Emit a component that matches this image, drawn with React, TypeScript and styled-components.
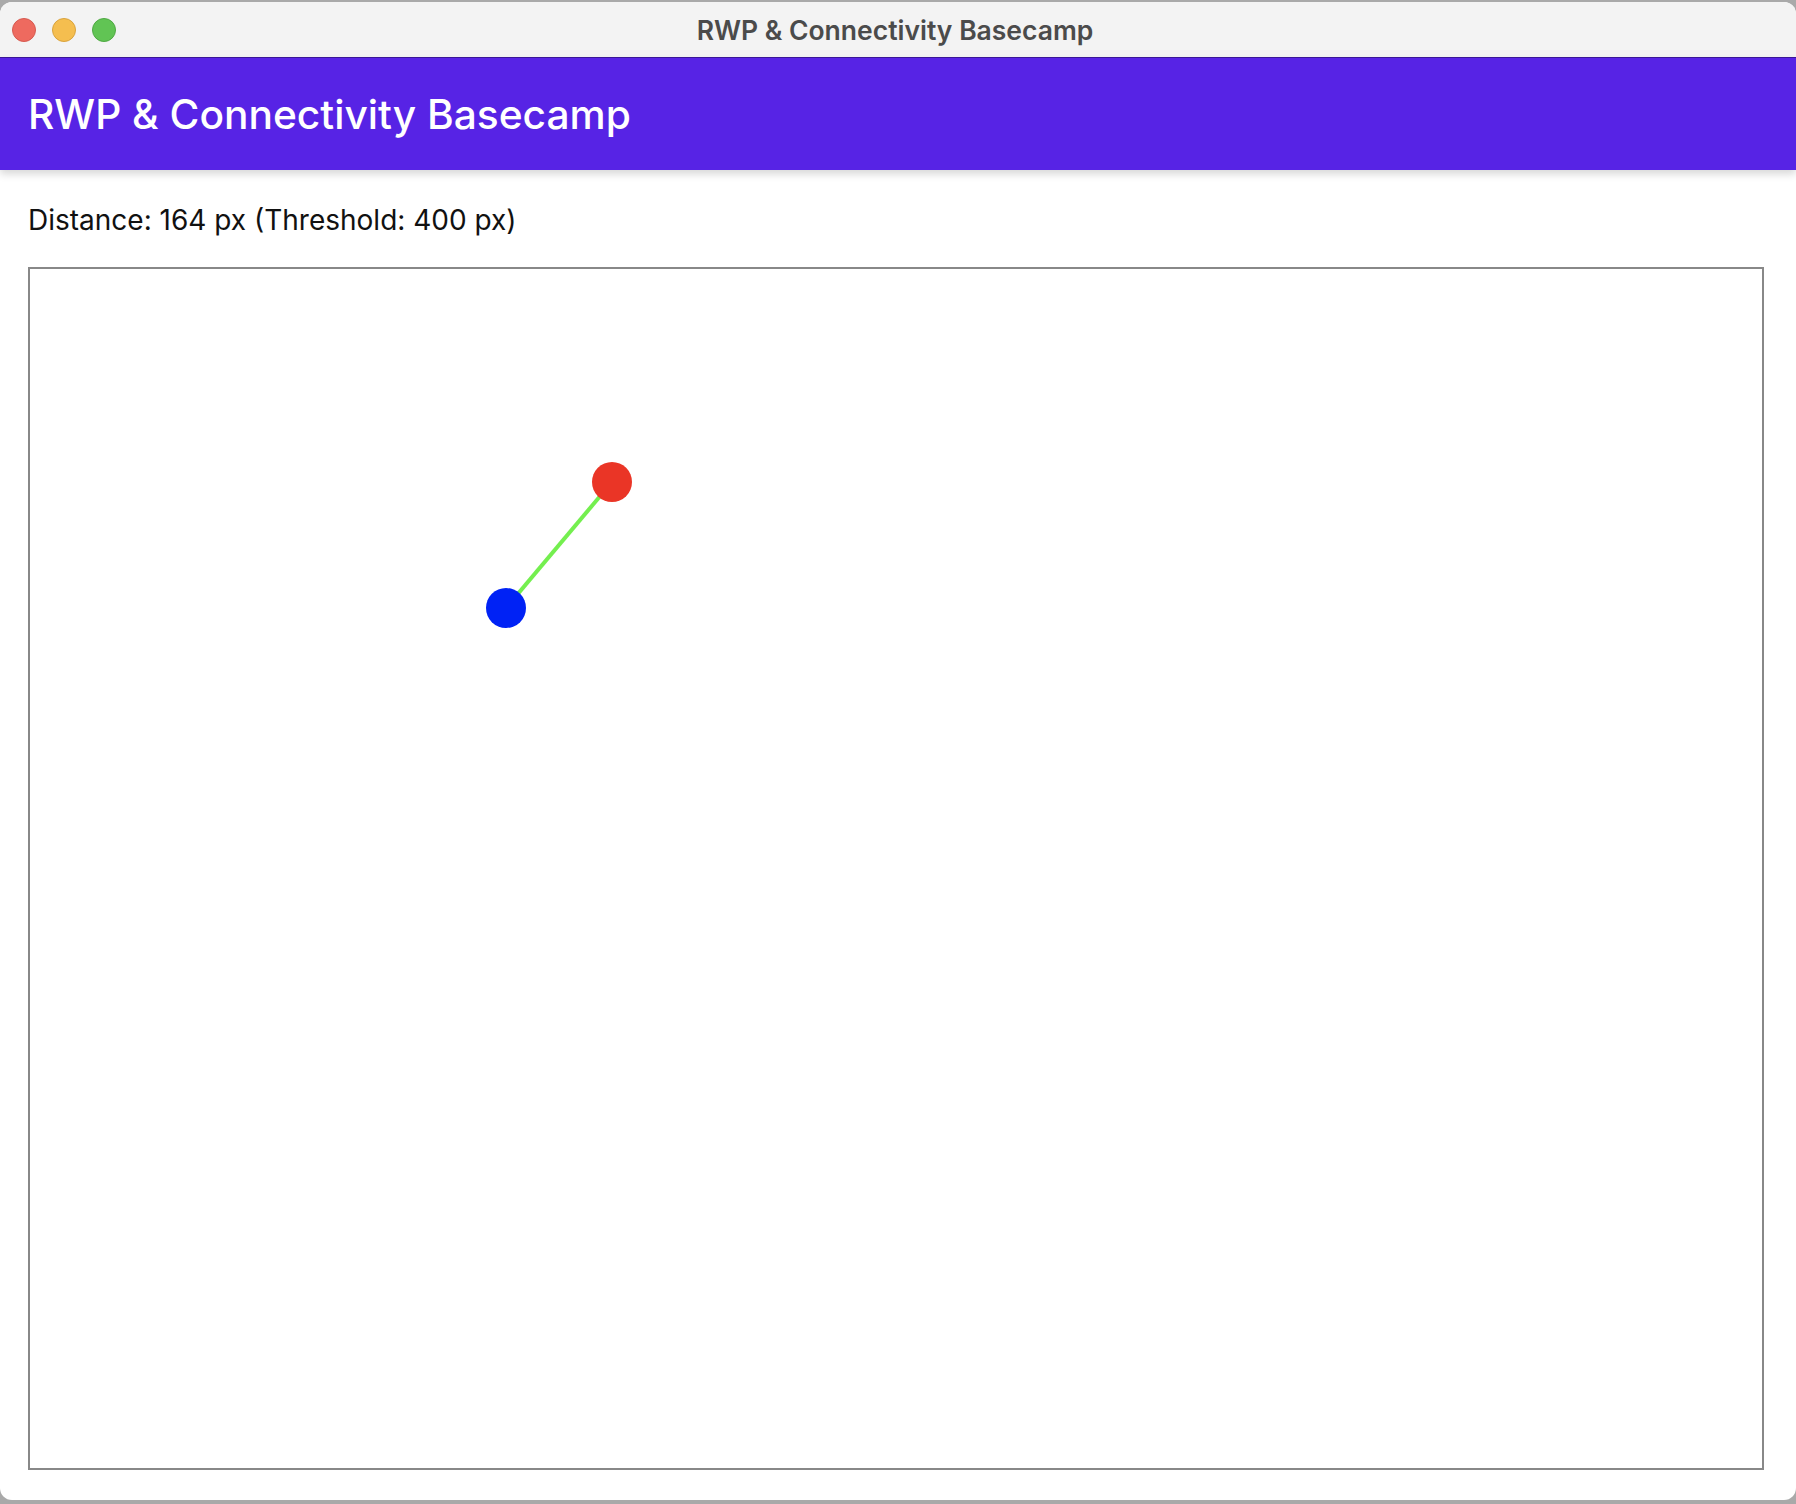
import React from 'react';
import styled, { createGlobalStyle } from 'styled-components';

const GlobalStyle = createGlobalStyle`
  html, body {
    margin: 0;
    padding: 0;
    background: #a9a9a9;
  }
  * {
    box-sizing: border-box;
  }
`;

const Window = styled.div`
  margin-top: 2px;
  height: 1498px;
  background: #fff;
  border-radius: 12px;
  overflow: hidden;
  display: flex;
  flex-direction: column;
  font-family: Inter, 'Noto Sans', sans-serif;
`;

const TitleBar = styled.div`
  height: 56px;
  flex-shrink: 0;
  background: #f3f3f3;
  border-bottom: 1px solid #3b1799;
  display: flex;
  align-items: center;
`;

const Lights = styled.div`
  display: flex;
  gap: 16px;
  padding-left: 12px;
`;

const Light = styled.span<{ $color: string; $edge: string }>`
  width: 24px;
  height: 24px;
  border-radius: 50%;
  background: ${({ $color }) => $color};
  border: 1px solid ${({ $edge }) => $edge};
`;

const WindowTitle = styled.div`
  flex: 1;
  text-align: center;
  margin-right: 122px;
  font-size: 26.5px;
  font-weight: 600;
  color: #4b4b4b;
`;

const Header = styled.header`
  height: 112px;
  flex-shrink: 0;
  background: #5723e5;
  display: flex;
  align-items: center;
  padding: 0 28px;
  box-shadow: 0 4px 8px rgba(0, 0, 0, 0.16);
  position: relative;
  z-index: 1;
  h1 {
    margin: 0;
    font-size: 40.7px;
    font-weight: 500;
    color: #fff;
  }
`;

const Main = styled.main`
  flex: 1;
  display: flex;
  flex-direction: column;
  padding: 33px 32px 30px 28px;
  gap: 30px;
`;

const Status = styled.div`
  font-size: 28px;
  color: #111;
  line-height: 34px;
`;

const Canvas = styled.div`
  flex: 1;
  border: 2px solid #888;
  svg {
    display: block;
    width: 100%;
    height: 100%;
  }
`;

const nodes = {
  a: { x: 476, y: 339, color: '#0022f5' },
  b: { x: 582, y: 213, color: '#ea3526' },
};

export default function App() {
  const { a, b } = nodes;
  const dist = Math.floor(Math.hypot(a.x - b.x, a.y - b.y));
  return (
    <>
      <GlobalStyle />
      <Window>
        <TitleBar>
          <Lights>
            <Light $color="#ee6a5f" $edge="#d65a50" />
            <Light $color="#f5be4f" $edge="#d9a33d" />
            <Light $color="#61c454" $edge="#4fa943" />
          </Lights>
          <WindowTitle>RWP &amp; Connectivity Basecamp</WindowTitle>
        </TitleBar>
        <Header>
          <h1>RWP &amp; Connectivity Basecamp</h1>
        </Header>
        <Main>
          <Status>Distance: {dist} px (Threshold: 400 px)</Status>
          <Canvas>
            <svg>
              <line x1={a.x} y1={a.y} x2={b.x} y2={b.y} stroke="#74ef4f" strokeWidth={4} />
              <circle cx={a.x} cy={a.y} r={20} fill={a.color} />
              <circle cx={b.x} cy={b.y} r={20} fill={b.color} />
            </svg>
          </Canvas>
        </Main>
      </Window>
    </>
  );
}
